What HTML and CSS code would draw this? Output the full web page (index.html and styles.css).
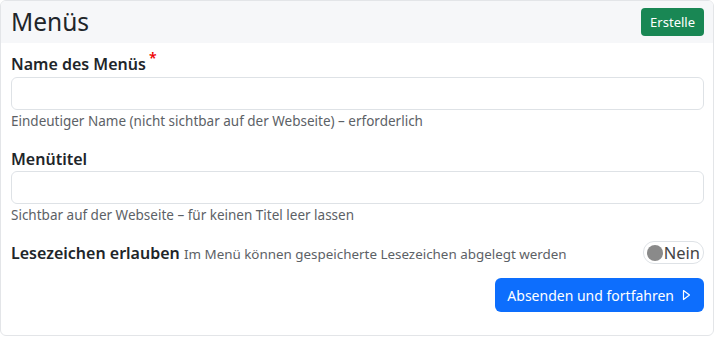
FILE: index.html
```html
<!DOCTYPE html>
<html lang="de">
<head>
    <meta charset="UTF-8">
    <title>Menüs</title>
    <link rel="stylesheet" href="styles.css">
</head>
<body>
    <div class="card">
        <div class="card-header">
            <h1>Menüs</h1>
            <button type="button" class="btn-create">Erstelle</button>
        </div>
        <form class="card-body">
            <div class="form-group">
                <label for="menu-name">Name des Menüs<span class="required">*</span></label>
                <input type="text" id="menu-name" name="name">
                <small>Eindeutiger Name (nicht sichtbar auf der Webseite) – erforderlich</small>
            </div>
            <div class="form-group">
                <label for="menu-title">Menütitel</label>
                <input type="text" id="menu-title" name="title">
                <small>Sichtbar auf der Webseite – für keinen Titel leer lassen</small>
            </div>
            <div class="switch-row">
                <div class="switch-label">
                    <strong>Lesezeichen erlauben</strong>
                    <span>Im Menü können gespeicherte Lesezeichen abgelegt werden</span>
                </div>
                <label class="toggle">
                    <span class="knob"></span>
                    <span>Nein</span>
                </label>
            </div>
            <div class="actions">
                <button type="submit" class="btn-submit">
                    Absenden und fortfahren
                    <svg width="9" height="12" viewBox="0 0 9 12"><path d="M1.5 1.5 L7.5 6 L1.5 10.5 Z" fill="none" stroke="#fff" stroke-width="1.2" stroke-linejoin="round"/></svg>
                </button>
            </div>
        </form>
    </div>
</body>
</html>
```

FILE: styles.css
```css
body {
    margin: 0;
    font-family: "Noto Sans", sans-serif;
    color: #212529;
    background: #fff;
}
.card {
    width: 712px;
    height: 334px;
    border: 1px solid #e3e5e8;
    border-radius: 6px;
    overflow: hidden;
    box-sizing: content-box;
}
.card-header {
    display: flex;
    align-items: center;
    justify-content: space-between;
    height: 42px;
    padding: 0 9px 0 10px;
    background: #f6f7f9;
}
h1 {
    margin: 0;
    font-size: 24.5px;
    font-weight: 400;
    line-height: 1.2;
}
.btn-create {
    height: 28px;
    padding: 0 9px;
    background: #198754;
    color: #fff;
    border: none;
    border-radius: 4px;
    font-family: inherit;
    font-size: 13px;
}
.card-body {
    padding: 9px 9px 0 10px;
}
.form-group {
    margin-bottom: 16px;
}
label {
    display: block;
    font-weight: 600;
    font-size: 16px;
    line-height: 24px;
}
.required {
    color: #e00;
    margin-left: 3px;
    position: relative;
    top: -7px;
    font-size: 14px;
}
input[type="text"] {
    display: block;
    width: 100%;
    height: 33px;
    border: 1px solid #dee2e6;
    border-radius: 6px;
    box-sizing: border-box;
    margin: 0;
}
small {
    display: block;
    margin-top: 1px;
    font-size: 13.5px;
    line-height: 20px;
    color: #5c6166;
}
.switch-row {
    display: flex;
    align-items: center;
    justify-content: space-between;
    margin-top: 11px;
}
.switch-label strong {
    font-size: 16px;
    font-weight: 600;
}
.switch-label span {
    font-size: 13.4px;
    color: #5c6166;
}
.toggle {
    display: flex;
    align-items: center;
    gap: 1px;
    height: 21px;
    padding: 0 3px 0 3px;
    border: 1px solid #dee2e6;
    border-radius: 11px;
    font-weight: 400;
    font-size: 16.5px;
    color: #444;
}
.knob {
    width: 16px;
    height: 16px;
    border-radius: 50%;
    background: #8a8a8a;
}
.actions {
    display: flex;
    justify-content: flex-end;
    margin-top: 14px;
}
.btn-submit {
    display: flex;
    align-items: center;
    gap: 8px;
    height: 34px;
    padding: 0 13px 0 12px;
    background: #0d6efd;
    color: #fff;
    border: none;
    border-radius: 6px;
    font-family: inherit;
    font-size: 14px;
}
```
